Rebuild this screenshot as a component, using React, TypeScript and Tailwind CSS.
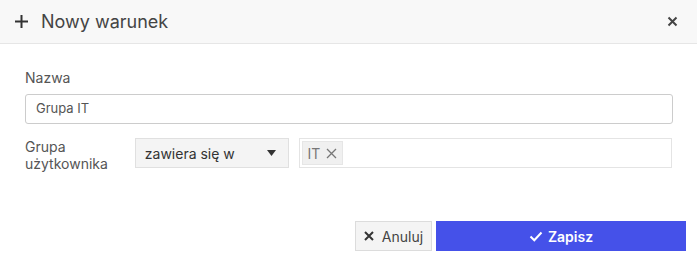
import React from 'react';

export default function App() {
  return (
    <div className="w-[697px] h-[254px] bg-white font-['Inter',sans-serif] text-[#333]">
      <div className="h-[44px] bg-[#f8f8f8] border-b border-[#e6e6e6] flex items-center pl-[14px] pr-[19px]">
        <svg width="15" height="15" viewBox="0 0 15 15" className="text-[#333]">
          <path d="M7.5 1v13M1 7.5h13" stroke="currentColor" strokeWidth="2" />
        </svg>
        <span className="ml-[12px] text-[18px] text-[#444]">Nowy warunek</span>
        <svg width="11" height="11" viewBox="0 0 11 11" className="ml-auto text-[#444]">
          <path d="M1.5 1.5l8 8M9.5 1.5l-8 8" stroke="currentColor" strokeWidth="2" />
        </svg>
      </div>

      <div className="px-[25px] pt-[25px]">
        <div className="text-[14px] text-[#555] leading-[18px]">Nazwa</div>
        <div className="mt-[7px] w-[648px] h-[30px] border border-[#ccc] rounded-[3px] flex items-center px-[10px] text-[13px] text-[#555]">
          Grupa IT
        </div>

        <div className="mt-[14px] flex items-start">
          <div className="w-[110px] text-[14px] leading-[17px] text-[#555]">
            Grupa
            <br />
            użytkownika
          </div>
          <div className="w-[154px] h-[30px] bg-[#f4f4f4] border border-[#e0e0e0] flex items-center pl-[9px] pr-[12px] text-[14px] text-[#333]">
            zawiera się w
            <svg width="9" height="6" viewBox="0 0 9 6" className="ml-auto text-[#333]">
              <path d="M0 0h9L4.5 6z" fill="currentColor" />
            </svg>
          </div>
          <div className="ml-[10px] w-[374px] h-[30px] border border-[#e4e4e4] flex items-center pl-[2px]">
            <div className="h-[24px] bg-[#f0f0f0] border border-[#e6e6e6] flex items-center px-[5px] text-[14px] text-[#777]">
              IT
              <svg width="11" height="11" viewBox="0 0 11 11" className="ml-[6px] text-[#777]">
                <path d="M1 1l9 9M10 1l-9 9" stroke="currentColor" strokeWidth="1.3" />
              </svg>
            </div>
          </div>
        </div>
      </div>

      <div className="flex justify-end pr-[11px] mt-[49px]">
        <button className="w-[77px] h-[30px] bg-[#f4f4f4] border border-[#dcdcdc] flex items-center justify-center text-[14px] text-[#444]">
          <svg width="10" height="10" viewBox="0 0 10 10" className="mr-[8px] text-[#333]">
            <path d="M1 1l8 8M9 1l-8 8" stroke="currentColor" strokeWidth="2" />
          </svg>
          Anuluj
        </button>
        <button className="ml-[4px] w-[250px] h-[30px] bg-[#4551e9] flex items-center justify-center text-[14px] font-semibold text-white">
          <svg width="14" height="11" viewBox="0 0 14 11" className="mr-[5px]">
            <path d="M1.5 5.5l3.8 3.8L12.5 1.5" stroke="white" strokeWidth="2" fill="none" />
          </svg>
          Zapisz
        </button>
      </div>
    </div>
  );
}
